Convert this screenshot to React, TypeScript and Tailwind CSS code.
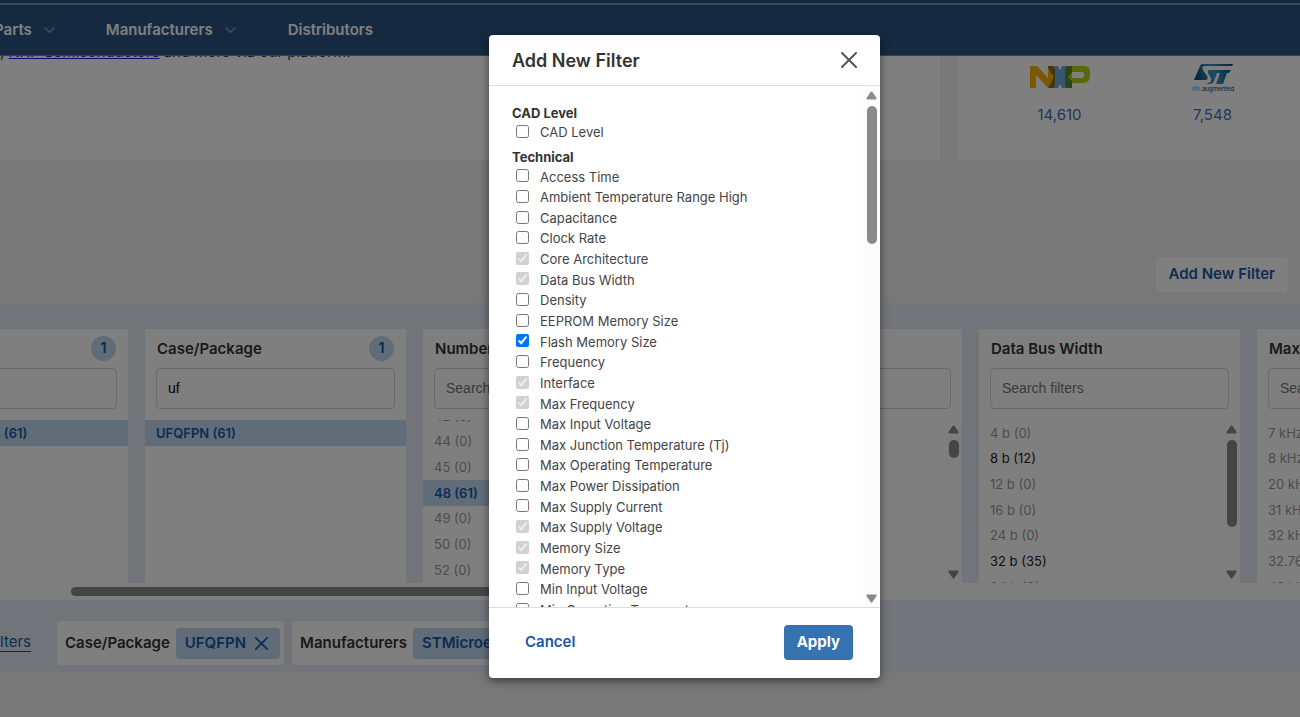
import { useState } from "react";

const TECHNICAL = [
  "Access Time",
  "Ambient Temperature Range High",
  "Capacitance",
  "Clock Rate",
  "Core Architecture",
  "Data Bus Width",
  "Density",
  "EEPROM Memory Size",
  "Flash Memory Size",
  "Frequency",
  "Interface",
  "Max Frequency",
  "Max Input Voltage",
  "Max Junction Temperature (Tj)",
  "Max Operating Temperature",
  "Max Power Dissipation",
  "Max Supply Current",
  "Max Supply Voltage",
  "Memory Size",
  "Memory Type",
  "Min Input Voltage",
  "Min Operating Temperature",
];

// already shown as columns, so they can't be toggled
const LOCKED = [
  "Core Architecture",
  "Data Bus Width",
  "Interface",
  "Max Frequency",
  "Max Supply Voltage",
  "Memory Size",
  "Memory Type",
];

type Row = { label: string; state?: "on" | "off" };
type Col = { title: string; badge?: number; query?: string; rows: Row[]; thumb?: string; scrolled?: boolean };

const off = (...labels: string[]): Row[] => labels.map((label) => ({ label, state: "off" }));

const COLUMNS: Col[] = [
  { title: "Manufacturers", badge: 1, rows: [{ label: "STMicroelectronics (61)", state: "on" }] },
  { title: "Case/Package", badge: 1, query: "uf", rows: [{ label: "UFQFPN (61)", state: "on" }] },
  {
    title: "Number of Pins",
    scrolled: true,
    rows: [...off("42 (0)", "44 (0)", "45 (0)"), { label: "48 (61)", state: "on" }, ...off("49 (0)", "50 (0)", "52 (0)")],
  },
  { title: "Core Architecture", rows: [], thumb: "h-[18px]" },
  {
    title: "Data Bus Width",
    thumb: "h-[87px]",
    rows: [...off("4 b (0)"), { label: "8 b (12)" }, ...off("12 b (0)", "16 b (0)", "24 b (0)"), { label: "32 b (35)" }, ...off("64 b (0)")],
  },
  { title: "Max Frequency", rows: off("7 kHz (0)", "8 kHz (0)", "20 kHz (0)", "31 kHz (0)", "32 kHz (0)", "32.768 kHz (0)", "40 kHz (0)") },
];

export default function App() {
  return (
    <div className="relative h-screen overflow-hidden bg-[#f0f0f0] font-['Inter',sans-serif] text-[#333]">
      <TopNav />
      <Intro />
      <div className="flex h-[143px] items-end justify-end px-3 pb-[11px]">
        <button className="h-[35px] rounded bg-white px-[13px] pb-px text-[15px] font-semibold text-[#1858a8]">Add New Filter</button>
      </div>
      <section className="overflow-hidden bg-[#e3eaf4] pt-[26px]">
        <div className="-ml-[133px] flex gap-[17px]">
          {COLUMNS.map((c) => <FilterColumn key={c.title} col={c} />)}
        </div>
        <div className="h-[17px] bg-[#fcfcfc] pl-[71px] pt-1">
          <div className="h-[9px] w-3/5 rounded-full bg-[#8a8a8a]" />
        </div>
      </section>
      <SelectedFilters />
      <FilterDialog />
    </div>
  );
}

function TopNav() {
  return (
    <header className="border-b border-[#5f86bb] bg-[#2a5583]">
      <div className="h-[5px] border-b-2 border-[#7f93a8]" />
      <nav className="-ml-[6px] flex h-[50px] items-center whitespace-nowrap text-[15px] font-semibold text-white">
        <a href="#parts" className="flex items-center gap-3">Parts <Chevron /></a>
        <a href="#manufacturers" className="ml-[51px] flex items-center gap-3">Manufacturers <Chevron /></a>
        <a href="#distributors" className="ml-[52px]">Distributors</a>
      </nav>
    </header>
  );
}

function Chevron() {
  return (
    <svg className="h-[6px] w-[11px]" viewBox="0 0 11 6" fill="none" stroke="#8aa2bf" strokeWidth="1.2">
      <path d="M.5.5 5.5 5.3 10.5.5" />
    </svg>
  );
}

function Intro() {
  return (
    <div className="flex h-[104px] gap-[17px]">
      <div className="w-[940px] overflow-hidden bg-white">
        <p className="-mt-4 whitespace-nowrap text-[15px] leading-[24px]">
          , <a href="#nxp" className="text-[#2a1ad0] underline">NXP Semiconductors</a> and more via our platform.
        </p>
      </div>
      <div className="flex flex-1 bg-white pl-[26px] pt-[7px] text-center text-[15px] leading-[22px] text-[#3a73b4]">
        <a href="#nxp-parts" className="flex w-[153px] flex-col items-center">
          <NxpLogo />
          <span className="mt-[5px]">14,610</span>
        </a>
        <a href="#st-parts" className="flex w-[153px] flex-col items-center">
          <StLogo />
          <span className="mt-[5px]">7,548</span>
        </a>
      </div>
    </div>
  );
}

function NxpLogo() {
  return (
    <svg className="h-9 w-[60px]" viewBox="0 0 60 36" role="img" aria-label="NXP">
      <path fill="#8c6d1e" d="M18 3h6l2 4v14l-2 4h-6z" />
      <path fill="#568b2c" d="M42 3h-6l-2 4v14l2 4h6z" />
      <path fill="#6cace0" d="M24 3h4l2 4 2-4h4l-6 11 6 11h-4l-2-4-2 4h-4l6-11zM25 5v18l5-9zM35 5v18l-5-9z" />
      <path fill="#f9b000" d="M0 3h7l11 12V5l6 9-6 11L6 12v13H0z" />
      <path fill="#b5d11b" fillRule="evenodd" d="M42 3h12q6 0 6 6v4q0 7-7 7H42v-5h10q2 0 2-3v-1q0-2-2-2H42v9l-4-4 4-5z" />
    </svg>
  );
}

function StLogo() {
  return (
    <svg className="h-9 w-[42px]" viewBox="0 0 42 36" role="img" aria-label="ST life.augmented">
      <defs>
        <linearGradient id="st" gradientUnits="userSpaceOnUse" x1="2" y1="18" x2="40" y2="4">
          <stop offset="0" stopColor="#0b3a68" />
          <stop offset=".5" stopColor="#3d93c8" />
          <stop offset="1" stopColor="#12507c" />
        </linearGradient>
      </defs>
      <path fill="url(#st)" d="M10 1h31l-1 2H13q-4 0-2 4l4 6q2 4-2 4H2L8 3q1-2 2-2z" />
      <path fill="url(#st)" d="M18 7h21l-2 3h-2l-4 11h-7l4-11h-3l-3 8q-1 3-5 3h-3q7-2 5-6l-3-5q-1-3 2-3z" />
      <text x="0" y="28" fontSize="6" fill="#222b5c"><tspan fill="#4fa0d8">life</tspan>.augmented</text>
    </svg>
  );
}

function FilterColumn({ col }: { col: Col }) {
  const id = "q-" + col.title.replace(/\W/g, "");
  return (
    <div className="flex h-[254px] w-[261px] shrink-0 flex-col bg-white">
      <div className="flex h-[39px] items-center justify-between px-3">
        <label htmlFor={id} className="whitespace-nowrap text-[15px] font-semibold leading-[22px]">{col.title}</label>
        {col.badge && (
          <span className="flex size-[25px] items-center justify-center rounded-full bg-[#c0d8f0] text-[15px] font-semibold text-[#1858a8]">{col.badge}</span>
        )}
      </div>
      <div className="px-[11px]">
        <input id={id} defaultValue={col.query} placeholder="Search filters"
          className="h-[41px] w-full rounded border border-[#d4d4d4] bg-white px-[11px] pb-[2px] font-['Liberation_Sans',sans-serif] text-[14px] text-black placeholder:text-[#757575]" />
      </div>
      <div className="mt-[11px] flex min-h-0 flex-1 overflow-hidden">
        <div className={"min-w-0 flex-1 " + (col.scrolled ? "-mt-[17px]" : "")}>
          {/* nine equal rows */}
          <ul className="grid h-[231px] grid-rows-9 text-[13px]">
            {col.rows.map((r) => (
              <li key={r.label} className={
                "flex items-center whitespace-nowrap px-[11px] pt-px " +
                (r.state === "on" ? "bg-[#c0d8f0] font-semibold text-[#1858a8]" : r.state === "off" ? "text-[#999]" : "text-[#222]")
              }>
                {r.label}
              </li>
            ))}
          </ul>
        </div>
        {col.thumb && <ScrollRail thumb={col.thumb} />}
      </div>
    </div>
  );
}

function ScrollRail({ thumb }: { thumb: string }) {
  return (
    <div className="flex w-[17px] shrink-0 flex-col items-center bg-[#fcfcfc] pb-1 pt-[5px]">
      <svg className="h-[9px] w-[11px]" viewBox="0 0 11 9" fill="#8a8a8a"><path d="M5.500.5q.6 0 1 .6l4 6Q11 8.500 9.700 8.500H1.300Q0 8.500.5 7.100l4-6q.4-.6 1-.6z" /></svg>
      <div className={"mt-[6px] w-[10px] rounded-full bg-[#8a8a8a] " + thumb} />
      <svg className="mt-auto h-[9px] w-[11px]" viewBox="0 0 11 9" fill="#8a8a8a"><path d="M5.500 8.500q.6 0 1-.6l4-6Q11 .5 9.700.5H1.300Q0 .5.5 1.900l4 6q.4.6 1 .6z" /></svg>
    </div>
  );
}

function Cross({ className }: { className: string }) {
  return (
    <svg className={className} viewBox="0 0 16 16" fill="none" stroke="currentColor" strokeLinecap="round">
      <path d="M1 1l14 14M15 1 1 15" />
    </svg>
  );
}

function SelectedFilters() {
  return (
    <div className="flex h-[73px] whitespace-nowrap bg-[#e3eaf4]">
      <div className="flex w-[31px] items-end justify-end pb-[21px]">
        <a href="#reset" className="border-b border-[#1858a8] text-[15px] leading-[18px] text-[#1858a8]">Reset Filters</a>
      </div>
      <div className="ml-[26px] flex gap-2 pt-[21px]">
        <Chip name="Case/Package" value="UFQFPN" />
        <Chip name="Manufacturers" value="STMicroelectronics" />
      </div>
    </div>
  );
}

function Chip({ name, value }: { name: string; value: string }) {
  return (
    <div className="flex h-[44px] items-center gap-[6px] rounded bg-white pl-2 pr-1 text-[15px] font-semibold">
      <span className="pt-px">{name}</span>
      <button className="flex h-[31px] items-center gap-[9px] rounded bg-[#c0d8f0] pl-[9px] pr-2 text-[#1858a8]">
        {value} <Cross className="mr-1 size-[13px] stroke-2" />
      </button>
    </div>
  );
}

function FilterDialog() {
  const [picked, setPicked] = useState<string[]>(["Flash Memory Size"]);
  const toggle = (name: string) =>
    setPicked((p) => (p.includes(name) ? p.filter((n) => n !== name) : [...p, name]));

  const option = (name: string) => (
    <Option key={name} name={name} locked={LOCKED.includes(name)} checked={picked.includes(name)} onChange={() => toggle(name)} />
  );

  return (
    <div className="absolute inset-0 flex items-start justify-center bg-black/50 pt-[35px]">
      <div role="dialog" aria-label="Add New Filter" className="-mr-[69px] w-[391px] overflow-hidden rounded bg-white shadow-[0_3px_8px_rgba(0,0,0,0.5)]">
        <div className="flex h-[51px] items-center justify-between border-b border-[#ddd] px-[23px]">
          <h2 className="pt-[2px] text-lg font-semibold">Add New Filter</h2>
          <button aria-label="Close" className="text-[#555]"><Cross className="size-4 stroke-2" /></button>
        </div>
        <div className="flex h-[521px] overflow-hidden">
          <div className="flex-1 pl-[23px] pt-[18px] text-[13px] text-[#444]">
            <h3 className="h-[18px] font-bold leading-[18px] text-[#333]">CAD Level</h3>
            <div className="grid h-[21px]">{option("CAD Level")}</div>
            <h3 className="mt-[5px] h-[18px] font-bold leading-[18px] text-[#333]">Technical</h3>
            <div className="mt-px grid h-[454px] auto-rows-fr">{TECHNICAL.map(option)}</div>
          </div>
          <ScrollRail thumb="h-[138px]" />
        </div>
        <div className="flex h-[71px] items-center justify-between border-t border-[#ddd] pb-[2px] pl-9 pr-[27px] text-[15px] font-semibold">
          <button className="text-[#1858a8]">Cancel</button>
          <button className="h-[35px] rounded bg-[#3572b0] px-[13px] font-bold text-white">Apply</button>
        </div>
      </div>
    </div>
  );
}

type OptionProps = { name: string; locked: boolean; checked: boolean; onChange: () => void };

function Option({ name, locked, checked, onChange }: OptionProps) {
  return (
    <label className="flex items-center gap-[11px] pl-1">
      <input type="checkbox" className="mb-[3px] size-[13px]" disabled={locked} checked={locked || checked} onChange={onChange} />
      {name}
    </label>
  );
}
